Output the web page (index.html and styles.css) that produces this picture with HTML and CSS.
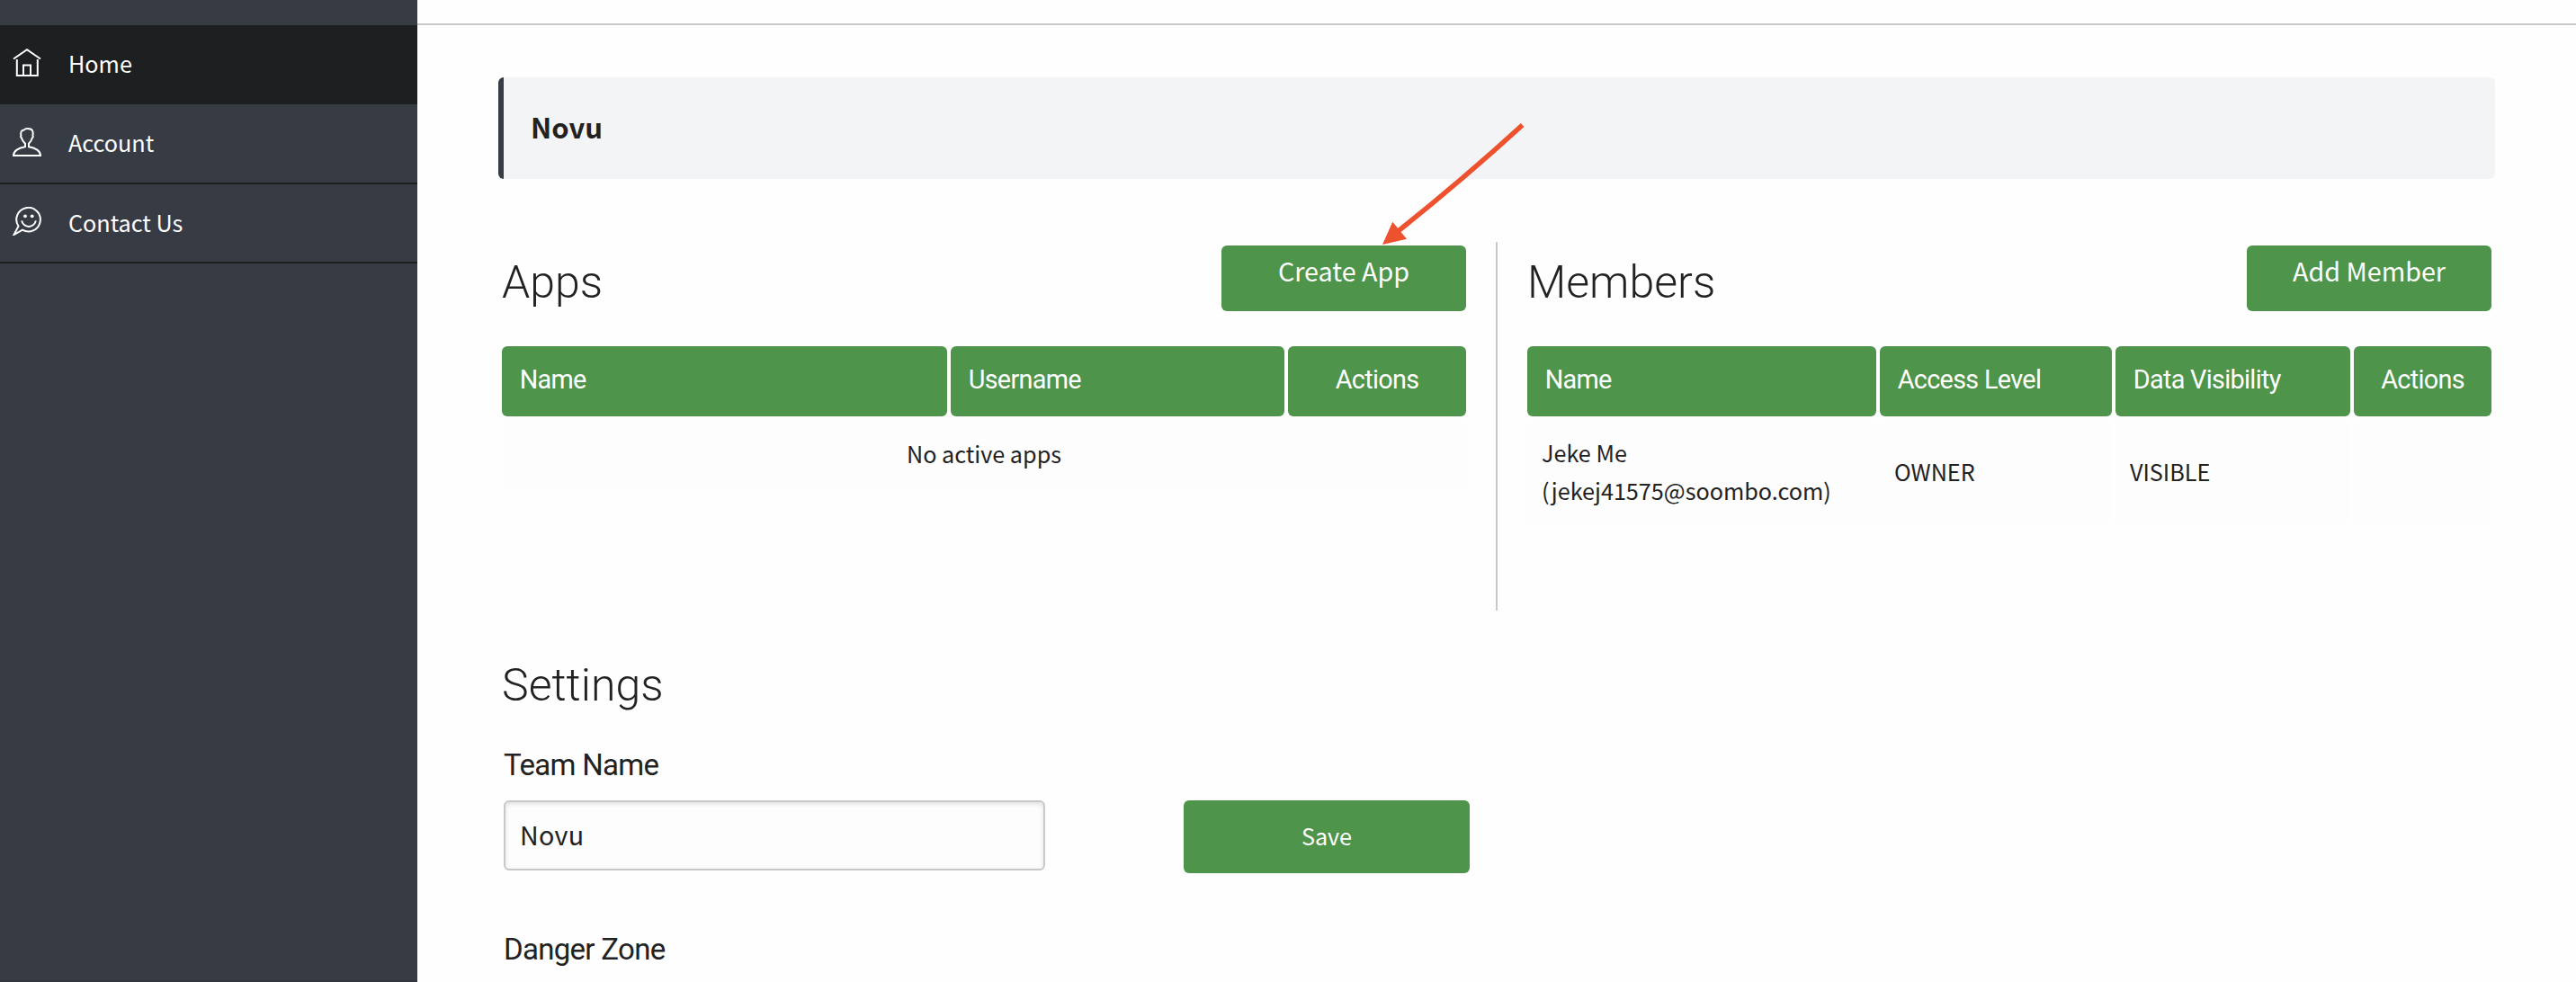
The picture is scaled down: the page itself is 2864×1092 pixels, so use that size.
FILE: index.html
```html
<!DOCTYPE html>
<html lang="en">
<head>
<meta charset="utf-8">
<title>Novu</title>
<link rel="stylesheet" href="styles.css">
</head>
<body>
<nav class="sidebar">
  <a class="nav-item active">
    <svg class="icon" viewBox="0 0 32 32"><path d="M1 11.5 16 1.2 31 11.5M4.8 12v17.9h23V12M12 29.500V18.600h8v10.900"/></svg>
    <span>Home</span>
  </a>
  <a class="nav-item">
    <svg class="icon" viewBox="0 0 32 32"><path d="M1 31h30c0-5-5.500-8.800-13-9.800v-3.500c2.600-2.500 3.400-4.500 3.800-6.300.9-.5 1-1.800.6-2.700C23.300 3.700 22 1 16.600 1c-2.500 0-3.300.7-3.900 1.500-3.300.2-3.900 3-3.300 6.200-.5.900-.3 2.200.6 2.700.5 2 1.700 4 4 6.300v3.500C6.500 22.200 1 26 1 31z"/></svg>
    <span>Account</span>
  </a>
  <a class="nav-item">
    <svg class="icon" viewBox="0 0 32 32"><path d="M11 25.700A13.300 13.300 0 1 0 6.500 21.500L1.500 31z"/><path d="M10.200 15.300a7.900 7.900 0 0 0 15.600 0"/><circle class="eye" cx="14" cy="10.300" r="1.900"/><circle class="eye" cx="21.700" cy="10.300" r="1.900"/></svg>
    <span>Contact Us</span>
  </a>
</nav>
<main class="main">
  <header class="topbar"></header>
  <div class="content">
    <h1 class="banner">Novu</h1>
    <div class="columns">
      <section class="panel">
        <div class="panel-head">
          <h2 class="title">Apps</h2>
          <button class="btn btn-head">Create App</button>
        </div>
        <div class="table table-apps">
          <div class="th">Name</div>
          <div class="th">Username</div>
          <div class="th center">Actions</div>
          <div class="td empty">No active apps</div>
        </div>
      </section>
      <div class="divider"></div>
      <section class="panel">
        <div class="panel-head">
          <h2 class="title">Members</h2>
          <button class="btn btn-head">Add Member</button>
        </div>
        <div class="table table-members">
          <div class="th">Name</div>
          <div class="th">Access Level</div>
          <div class="th">Data Visibility</div>
          <div class="th center">Actions</div>
          <div class="td">Jeke Me<br>(jekej41575@soombo.com)</div>
          <div class="td">OWNER</div>
          <div class="td">VISIBLE</div>
          <div class="td"></div>
        </div>
      </section>
    </div>
    <section class="settings">
      <h2 class="title">Settings</h2>
      <h3 class="subtitle">Team Name</h3>
      <form class="team-form">
        <input class="field" type="text" value="Novu">
        <button class="btn btn-save" type="button">Save</button>
      </form>
      <h3 class="subtitle">Danger Zone</h3>
    </section>
  </div>
</main>
<svg class="arrow" viewBox="0 0 170 150"><path class="shaft" d="M162.700 9Q96 70 22 129"/><path class="head" d="M7 142 18.300 116.700 34 135.700z"/></svg>
</body>
</html>
```
FILE: styles.css
```css
* {
  box-sizing: border-box;
}

body {
  position: relative;
  display: flex;
  height: 1092px;
  margin: 0;
  overflow: hidden;
  background: #fefefe;
  color: #222;
  font: 25.2px/40px "Noto Sans CJK SC", sans-serif;
}

h1, h2, h3 {
  margin: 0;
}

.sidebar {
  width: 464px;
  padding-top: 28px;
  background: #373b44;
  border-bottom: 2px solid #33353f;
}

.nav-item {
  display: flex;
  gap: 30px;
  height: 88px;
  padding: 22px 0 0 14px;
  border-bottom: 2px solid #1e1f21;
  color: #fff;
}

.nav-item + .nav-item {
  height: 88.5px;
}

.nav-item.active {
  background: #1e1f21;
}

.icon {
  width: 32px;
  height: 32px;
  margin-top: 3.5px;
  fill: none;
  stroke: #fff;
  stroke-width: 2;
}

.eye {
  fill: #fff;
  stroke: none;
}

.main {
  flex: 1;
}

.topbar {
  height: 28px;
  border-bottom: 2px solid #c8c8cc;
}

.content {
  padding: 58px 90px 0;
}

.banner {
  height: 113px;
  padding: 33px 0 0 30px;
  border-left: 6px solid #373b44;
  border-radius: 6px;
  background: #f3f4f6;
  font-size: 31px;
  font-weight: 600;
  line-height: 44px;
}

.columns {
  display: flex;
  justify-content: space-between;
  height: 410px;
  margin-top: 70px;
  padding: 0 4px;
}

.panel {
  width: 1072px;
  padding-top: 4px;
}

.divider {
  width: 2px;
  background: #c8c8cc;
}

.panel-head {
  display: flex;
  justify-content: space-between;
  align-items: flex-start;
  height: 112px;
}

.title {
  font: 300 50px/60px Roboto, sans-serif;
}

.panel-head .title {
  margin-top: 11px;
}

.btn {
  border: 0;
  border-radius: 6px;
  background: #4e944a;
  color: #fff;
  font-family: inherit;
  line-height: 40px;
}

.btn-head {
  width: 272px;
  height: 73px;
  padding: 0 0 17px;
  font-size: 28.7px;
}

.table {
  display: grid;
  gap: 4px;
}

.table-apps {
  grid-template-columns: 495px 371px 198px;
  grid-template-rows: 78px 77px;
}

.table-members {
  grid-template-columns: 388px 258px 261px 153px;
  grid-template-rows: 78px 115px;
}

.th {
  padding: 17px 19.7px 0;
  border-radius: 6px;
  background: #4e944a;
  color: #fff;
  font: 400 28.8px/40px Roboto, sans-serif;
  letter-spacing: -0.68px;
}

.center {
  padding-inline: 0;
  text-align: center;
}

.td {
  display: flex;
  align-items: center;
  padding: 0 16px;
  background: #fdfdfd;
  line-height: 41.7px;
}

.empty {
  grid-column: 1 / -1;
  justify-content: center;
  padding-bottom: 2px;
}

.settings {
  padding: 53px 4px 0;
}

.subtitle {
  margin: 39px 0 19px 2px;
  font: 400 33px/40px Roboto, sans-serif;
  letter-spacing: -0.7px;
}

.team-form {
  display: flex;
  gap: 154px;
  height: 81px;
  padding-left: 2px;
}

.team-form + .subtitle {
  margin-top: 65px;
}

.field {
  width: 602px;
  height: 78px;
  padding: 0 17px 4px 16px;
  border: 2px solid #c8c8c8;
  border-radius: 6px;
  background: #fdfdfd;
  box-shadow: inset 0 2px 5px rgba(0, 0, 0, 0.12);
  color: #222;
  font: inherit;
  font-size: 28.7px;
  letter-spacing: 0.3px;
}

.btn-save {
  width: 318px;
  padding: 0 0 3px;
  font-size: 25.2px;
}

.arrow {
  position: absolute;
  top: 130px;
  left: 1530px;
  width: 170px;
  height: 150px;
}

.shaft {
  fill: none;
  stroke: #ee512e;
  stroke-width: 5.5;
}

.head {
  fill: #ee512e;
}
```
